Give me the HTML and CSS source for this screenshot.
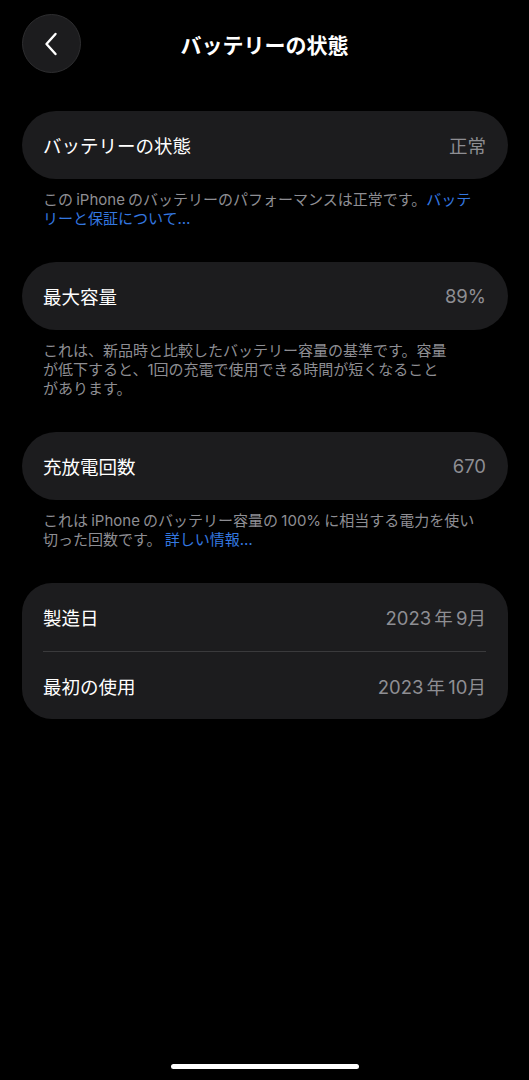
FILE: index.html
```html
<!DOCTYPE html>
<html lang="ja">
<head>
    <meta charset="UTF-8">
    <meta name="viewport" content="width=device-width, initial-scale=1.0">
    <title>バッテリーの状態</title>
    <link rel="stylesheet" href="styles.css">
</head>
<body>
    <div class="screen">
        <header class="nav">
            <button class="back" type="button" aria-label="戻る">
                <svg width="16" height="24" viewBox="0 0 16 24">
                    <path d="M12.5 2 L3.5 12 L12.5 22" fill="none" stroke="#fff" stroke-width="2.4" stroke-linecap="round" stroke-linejoin="round"/>
                </svg>
            </button>
            <h1 class="nav-title">バッテリーの状態</h1>
        </header>

        <main class="content">
            <div class="card">
                <div class="row">
                    <span class="label">バッテリーの状態</span>
                    <span class="value">正常</span>
                </div>
            </div>
            <p class="note">この iPhone のバッテリーのパフォーマンスは正常です。<a href="#">バッテ<br>リーと保証について…</a></p>

            <div class="card">
                <div class="row">
                    <span class="label">最大容量</span>
                    <span class="value">89%</span>
                </div>
            </div>
            <p class="note">これは、新品時と比較したバッテリー容量の基準です。容量<br>が低下すると、1回の充電で使用できる時間が短くなること<br>があります。</p>

            <div class="card">
                <div class="row">
                    <span class="label">充放電回数</span>
                    <span class="value">670</span>
                </div>
            </div>
            <p class="note">これは iPhone のバッテリー容量の 100% に相当する電力を使い<br>切った回数です。 <a href="#">詳しい情報…</a></p>

            <div class="card group">
                <div class="row">
                    <span class="label">製造日</span>
                    <span class="value">2023 年 9月</span>
                </div>
                <div class="row">
                    <span class="label">最初の使用</span>
                    <span class="value">2023 年 10月</span>
                </div>
            </div>
        </main>

        <div class="home-bar"></div>
    </div>
</body>
</html>
```

FILE: styles.css
```css
* {
    box-sizing: border-box;
}
body {
    margin: 0;
    background: #000;
    color: #fff;
    font-family: Inter, "Noto Sans CJK JP", "Noto Sans", sans-serif;
}
.screen {
    height: 1080px;
    display: flex;
    flex-direction: column;
    overflow: hidden;
}
.nav {
    margin-top: 14px;
    height: 59px;
    padding: 0 22px;
    display: flex;
    align-items: center;
    position: relative;
}
.back {
    width: 59px;
    height: 59px;
    border-radius: 50%;
    background: #1c1c1e;
    border: 1px solid #2e2e30;
    display: flex;
    align-items: center;
    justify-content: center;
    padding: 0 2px 0 0;
    cursor: pointer;
}
.nav-title {
    position: absolute;
    left: 0;
    right: 0;
    margin: 0;
    text-align: center;
    font-size: 21px;
    font-weight: bold;
    pointer-events: none;
}
.content {
    padding: 38px 21px 0 22px;
}
.card {
    background: #1c1c1e;
    border-radius: 34px;
}
.row {
    height: 68px;
    padding: 0 22px 0 21px;
    display: flex;
    align-items: center;
    justify-content: space-between;
    font-size: 18.5px;
}
.label {
    color: #fff;
}
.value {
    color: #8e8e93;
    word-spacing: -2px;
}
.group {
    border-radius: 30px;
}
.group .row + .row {
    border-top: 1px solid #3a3a3c;
    margin: 0 22px 0 21px;
    padding: 0;
}
.note {
    margin: 11px 0 34px;
    padding-left: 21px;
    font-size: 15px;
    line-height: 19px;
    color: #8e8e93;
    white-space: nowrap;
    word-spacing: -1px;
}
.note a {
    color: #3478e0;
    text-decoration: none;
}
.home-bar {
    margin: auto auto 11px;
    width: 188px;
    height: 5px;
    border-radius: 3px;
    background: #fff;
}
```
